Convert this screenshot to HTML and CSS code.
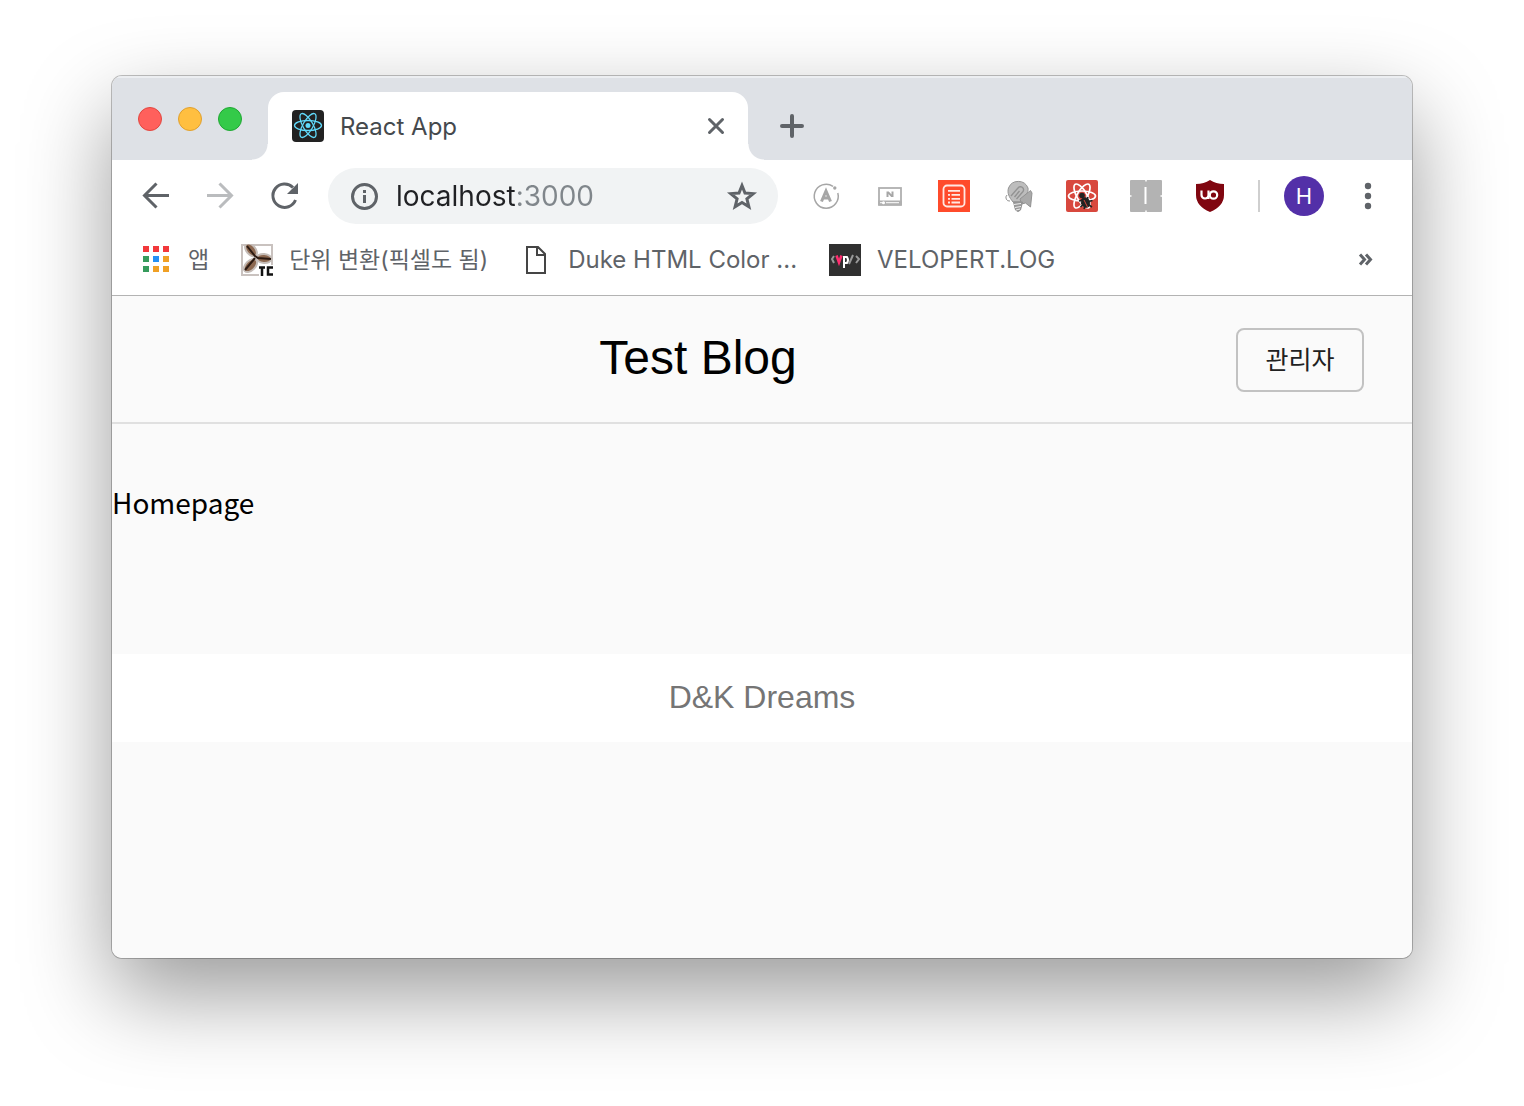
FILE: index.html
```html
<!DOCTYPE html>
<html lang="ko">
<head>
<meta charset="utf-8">
<meta name="viewport" content="width=device-width, initial-scale=1">
<title>React App</title>
<link rel="stylesheet" href="styles.css">
</head>
<body>
<div class="window">
  <div class="tab-strip">
    <div class="lights">
      <button class="light light-close" aria-label="Close window"></button>
      <button class="light light-minimize" aria-label="Minimize window"></button>
      <button class="light light-zoom" aria-label="Zoom window"></button>
    </div>
    <div class="tab">
      <svg class="icon" viewBox="0 0 32 32" aria-hidden="true">
        <rect width="32" height="32" rx="4" fill="#222"/>
        <g fill="none" stroke="#61dafb" stroke-width="1.3">
          <ellipse cx="16" cy="15.500" rx="13.500" ry="5"/>
          <ellipse cx="16" cy="15.500" rx="13.500" ry="5" transform="rotate(60 16 15.500)"/>
          <ellipse cx="16" cy="15.500" rx="13.500" ry="5" transform="rotate(120 16 15.500)"/>
        </g>
        <circle cx="16" cy="15.500" r="2.500" fill="#61dafb"/>
      </svg>
      <span class="tab-title">React App</span>
      <button class="plain" aria-label="Close tab">
        <svg class="icon" viewBox="0 0 32 32" stroke="#5f6368" stroke-width="3" stroke-linecap="round"><path d="M9.500 9.500l13 13M22.500 9.500l-13 13"/></svg>
      </button>
    </div>
    <button class="plain new-tab" aria-label="New tab">
      <svg class="icon" viewBox="0 0 32 32" stroke="#5f6368" stroke-width="4" stroke-linecap="round"><path d="M6 16h20M16 6v20"/></svg>
    </button>
  </div>

  <div class="toolbar">
    <div class="slots">
      <button class="slot" aria-label="Back">
        <svg class="icon" viewBox="0 0 32 32" fill="none" stroke="#5f6368" stroke-width="3"><path d="M29 15.500H5M16.500 3.500l-12 12 12 12"/></svg>
      </button>
      <button class="slot" aria-label="Forward" disabled>
        <svg class="icon" viewBox="0 0 32 32" fill="none" stroke="#babcbe" stroke-width="3"><path d="M3 15.500h24M15.500 3.500l12 12-12 12"/></svg>
      </button>
      <button class="slot" aria-label="Reload">
        <svg class="icon" viewBox="0 0 32 32" fill="none" stroke="#5f6368" stroke-width="3"><path d="M27.500 20a11.700 11.700 0 1 1-2.500-12.500"/><path d="M30 3v11H19z" fill="#5f6368" stroke="none"/></svg>
      </button>
    </div>
    <div class="omnibox">
      <button class="plain" aria-label="Site information">
        <svg class="icon" viewBox="0 0 32 32" fill="none" stroke="#5f6368" stroke-width="3"><circle cx="16.500" cy="16.500" r="12"/><path d="M16.500 15v8M16.500 10v3"/></svg>
      </button>
      <input class="address" type="text" value="localhost:3000" aria-label="Address" spellcheck="false">
      <button class="plain" aria-label="Bookmark this page">
        <svg class="icon" viewBox="0 0 32 32" fill="none" stroke="#5f6368" stroke-width="3"><path d="M16 5.500l3 7.500 8.200.6-6.300 5.200 2 8L16 22.500l-6.900 4.300 2-8-6.300-5.200L13 13z"/></svg>
      </button>
    </div>
    <div class="slots">
      <button class="slot" aria-label="Apollo Client Developer Tools">
        <svg class="icon" viewBox="0 0 32 32" fill="none" stroke="#a6a6a6"><path d="M27.800 13A12 12 0 1 1 23 6.300" stroke-width="1.500"/><circle cx="24.800" cy="8" r="1.700" fill="#a6a6a6" stroke="none"/><path d="M11.500 21.500L16 11l4.500 10.500M13 18h6" stroke-width="3"/></svg>
      </button>
      <button class="slot" aria-label="Video extension">
        <svg class="icon" viewBox="0 0 32 32" fill="none" stroke="#b0b0b0"><rect x="5" y="8" width="22" height="17" stroke-width="1.800"/><path d="M4 22.800h24" stroke-width="4.500"/><path d="M6 22.700h3M12 22.700h13" stroke="#fff" stroke-width="1"/><circle cx="9.500" cy="22.700" r="1.500" fill="#fff" stroke="none"/><path d="M12.500 17v-5.500h2.300l2.700 3v-3h2V17h-2.300l-2.700-3v3z" fill="#a6a6a6" stroke="none"/></svg>
      </button>
      <button class="slot" aria-label="List extension">
        <svg class="icon" viewBox="0 0 32 32" fill="none" stroke="#ffe8e3" stroke-width="1.800"><rect width="32" height="32" fill="#ff4b2b" stroke="none"/><rect x="5.500" y="5.500" width="21" height="21" rx="3.500"/><path d="M10 10.900h12M13.500 14.900H22M13.500 18.900H22M13.500 22.500H22M10 14.900h2M10 18.900h2M10 22.500h2"/></svg>
      </button>
      <button class="slot" aria-label="Lamp extension">
        <svg class="icon" viewBox="0 0 32 32" fill="#bdbdbd" stroke="#929292" stroke-width="1"><path d="M11 22C7 17 5 13 6.500 8A10.500 10.500 0 0 1 26 8c1 5-4 9-6 14z"/><path d="M18 19L28.500 10.500 30 13l-1.500 14-5-4-4 1z" fill="#aaa"/><path d="M5 15a3.500 3.500 0 0 0 3 6" fill="none"/><path d="M9 16l7-8a3 3 0 0 1 5 3.500L14.500 19M12.500 17l5-6" fill="none" stroke-width="1.400"/><path d="M11.500 22h9l-2 8q-2.500 3-5 0z" fill="#999"/><path d="M12 24.500l7-1M13 27.500l6-1M14 30l4-1" stroke="#eee"/></svg>
      </button>
      <button class="slot" aria-label="React Developer Tools">
        <svg class="icon" viewBox="0 0 32 32"><rect width="32" height="32" rx="2" fill="#d8483e"/><g fill="none" stroke="#fff" stroke-width="1.700"><ellipse cx="16" cy="16" rx="13.500" ry="5"/><ellipse cx="16" cy="16" rx="13.500" ry="5" transform="rotate(60 16 16)"/><ellipse cx="16" cy="16" rx="13.500" ry="5" transform="rotate(120 16 16)"/></g><g fill="#222" stroke="#222"><circle cx="16" cy="15.500" r="2.800" stroke="none"/><ellipse cx="19.500" cy="22.500" rx="4" ry="5" transform="rotate(-28 19.500 22.500)"/><path d="M13 21l4-1M14.500 27l3-3M22 17l-1 3M26.500 20.500l-4 1M26 27l-3-2M18 29l1-3" stroke-width="1.600"/></g><path d="M18 20l3.500 7" stroke="#d8483e" stroke-width="1"/></svg>
      </button>
      <button class="slot" aria-label="Grid extension">
        <svg class="icon" viewBox="0 0 32 32"><rect width="32" height="32" rx="1" fill="#b3b3b3"/><path d="M15.500 7v17" stroke="#fff" stroke-width="2"/><path d="M16 0v1.500M16 30.500V32M0 16h1.500M30.500 16H32" stroke="#fff" stroke-width="1.500"/></svg>
      </button>
      <button class="slot" aria-label="uBlock Origin">
        <svg class="icon" viewBox="0 0 32 32"><path d="M16 0q6 4 14 4v11q0 11-14 17Q2 26 2 15V4q8 0 14-4z" fill="#800610"/><path d="M7.500 10.500V15a3.500 3.500 0 0 0 7 0v-4.500M14.500 15.500V19" fill="none" stroke="#fff" stroke-width="2.200"/><circle cx="19.500" cy="15" r="3.700" fill="none" stroke="#fff" stroke-width="2.200"/></svg>
      </button>
    </div>
    <span class="divider"></span>
    <button class="avatar" aria-label="Profile">H</button>
    <button class="slot menu" aria-label="Menu">
      <svg class="icon" viewBox="0 0 32 32" fill="#5f6368"><circle cx="16" cy="6" r="3.200"/><circle cx="16" cy="16" r="3.200"/><circle cx="16" cy="26" r="3.200"/></svg>
    </button>
  </div>

  <nav class="bookmarks" aria-label="Bookmarks">
    <a class="bookmark korean" href="#">
      <svg class="icon" viewBox="0 0 32 32"><path d="M3 2h6v6H3zM13 2h6v6h-6zM23 2h6v6h-6z" fill="#f2383b"/><path d="M3 12h6v6H3zM3 22h6v6H3z" fill="#369b5c"/><path d="M13 12h6v6h-6z" fill="#2490f5"/><path d="M23 12h6v6h-6zM13 22h6v6h-6zM23 22h6v6h-6z" fill="#f0a025"/></svg>
      <span>앱</span>
    </a>
    <a class="bookmark korean" href="#">
      <svg class="icon" viewBox="0 0 32 32"><rect x="1" y="1" width="30" height="30" fill="#fff" stroke="#c9c2bf" stroke-width="2"/><g fill="#8c6850" stroke="#c5bdb8" stroke-width="2"><ellipse cx="10" cy="6" rx="7.500" ry="4.500" transform="rotate(50 10 6)"/><ellipse cx="23" cy="14.500" rx="7.500" ry="4.500" transform="rotate(5 23 14.500)"/><ellipse cx="9.500" cy="21.500" rx="8" ry="4.800" transform="rotate(-45 9.500 21.500)"/></g><path d="M6 2l8 10 3 2 13 1M14 14L4 26" fill="none" stroke="#2b1a12" stroke-width="2"/><path d="M18 21h14v11H18z" fill="#fff"/><path d="M18 23.500h6M21 23.500V32M32 23.500h-5v7h5" fill="none" stroke="#111" stroke-width="2.500"/></svg>
      <span>단위 변환(픽셀도 됨)</span>
    </a>
    <a class="bookmark" href="#">
      <svg class="icon" viewBox="0 0 32 32" fill="none" stroke="#454545" stroke-width="2"><path d="M7 3h11l7 7v19H7zM17 3v8h8"/></svg>
      <span>Duke HTML Color ...</span>
    </a>
    <a class="bookmark" href="#">
      <svg class="icon" viewBox="0 0 32 32" fill="none" stroke-width="2"><rect width="32" height="32" fill="#303030"/><path d="M5 12l-2 3 2 4M27 12l3 3-3 4M24 11l-4 9" stroke="#999"/><path d="M7.500 11.500l2.500 7 2.500-7" stroke="#ff2d6f" stroke-width="2.500"/><path d="M15 24V13h3q2 3 0 6h-3" stroke="#fff"/></svg>
      <span>VELOPERT.LOG</span>
    </a>
    <button class="plain more" aria-label="More bookmarks">
      <svg class="icon" viewBox="0 0 32 32" fill="none" stroke="#5f6368" stroke-width="3"><path d="M10 10.500l4.500 5-4.500 5M16 10.500l4.500 5-4.500 5"/></svg>
    </button>
  </nav>

  <div class="page">
    <header class="site-header">
      <h1 class="site-title">Test Blog</h1>
      <button class="admin">관리자</button>
    </header>
    <main class="content">Homepage</main>
    <footer class="site-footer">D&amp;K Dreams</footer>
  </div>
</div>
</body>
</html>
```
FILE: styles.css
```css
* {
  box-sizing: border-box;
}

body {
  display: flex;
  min-height: 100vh;
  margin: 0;
  padding: 76px 112px 148px;
  background: #fff;
  font-family: Inter, "Noto Sans CJK KR", sans-serif;
}

button,
input {
  margin: 0;
  padding: 0;
  border: 0;
  background: none;
  font: inherit;
}

.window {
  display: flex;
  flex: 1;
  flex-direction: column;
  min-width: 0;
  overflow: hidden;
  border-radius: 10px;
  background: #fff;
  box-shadow: 0 0 0 1px rgba(0, 0, 0, 0.24), 0 36px 88px rgba(0, 0, 0, 0.4);
}

.icon {
  display: block;
  flex: none;
  width: 32px;
  height: 32px;
}

.plain {
  flex: none;
}

/* Tab strip */
.tab-strip {
  display: flex;
  align-items: flex-end;
  height: 84px;
  background: #dee1e6;
  box-shadow: inset 0 2px 0 #eceef1;
}

.lights {
  display: flex;
  gap: 16px;
  align-self: center;
  padding: 2px 26px 0;
}

.light {
  width: 24px;
  height: 24px;
  border: 1px solid;
  border-radius: 50%;
}

.light-close {
  border-color: #e2463f;
  background: #ff605c;
}

.light-minimize {
  border-color: #e0a02e;
  background: #ffbf40;
}

.light-zoom {
  border-color: #1fa833;
  background: #34ca49;
}

.tab {
  position: relative;
  display: flex;
  flex: 0 1 480px;
  gap: 16px;
  align-items: center;
  height: 68px;
  padding: 0 16px 0 24px;
  border-radius: 16px 16px 0 0;
  background: #fff;
}

.tab::before,
.tab::after {
  position: absolute;
  bottom: 0;
  width: 16px;
  height: 16px;
  content: "";
}

.tab::before {
  right: 100%;
  background: radial-gradient(circle at 0 0, transparent 15px, #fff 16px);
}

.tab::after {
  left: 100%;
  background: radial-gradient(circle at 100% 0, transparent 15px, #fff 16px);
}

.tab-title {
  flex: 1;
  color: #45494d;
  font-size: 24px;
}

.new-tab {
  margin: 0 28px 18px;
}

/* Toolbar */
.toolbar {
  display: flex;
  align-items: center;
  height: 72px;
  padding: 0 20px;
}

.slots {
  display: flex;
  gap: 16px;
}

.slot {
  display: flex;
  flex: none;
  align-items: center;
  justify-content: center;
  width: 48px;
  height: 48px;
}

.omnibox {
  display: flex;
  flex: 1;
  gap: 16px;
  align-items: center;
  min-width: 0;
  height: 56px;
  margin: 0 24px 0 20px;
  padding: 0 20px;
  border-radius: 28px;
  background: #f1f3f4;
}

/* Host in dark text, port in grey */
.address {
  flex: 1;
  min-width: 0;
  background: linear-gradient(90deg, #202124 119px, #80868b 119px);
  background-clip: text;
  color: transparent;
  font-size: 28px;
  line-height: 40px;
}

.divider {
  flex: none;
  width: 2px;
  height: 32px;
  margin: 0 24px;
  background: #cfcfcf;
}

.avatar {
  flex: none;
  width: 40px;
  height: 40px;
  border-radius: 50%;
  background: #5330a8;
  color: #fff;
  font-size: 22px;
}

.menu {
  margin-left: 20px;
}

/* Bookmarks bar */
.bookmarks {
  display: flex;
  gap: 32px;
  align-items: center;
  height: 64px;
  padding: 0 30px 8px 28px;
  border-bottom: 1px solid #b3b3b3;
}

.bookmark {
  display: flex;
  gap: 16px;
  align-items: center;
  color: #5f6368;
  font-size: 24px;
  line-height: 32px;
  text-decoration: none;
  white-space: nowrap;
}

.korean {
  font-size: 23px;
}

.more {
  margin-left: auto;
}

/* Page */
.page {
  flex: 1;
  background: #fafafa;
}

.site-header {
  display: flex;
  align-items: flex-start;
  padding: 32px 48px 30px;
  border-bottom: 2px solid #e0e0e0;
}

.site-title {
  flex: 1;
  margin: 0;
  color: #000;
  font: 400 48px/60px "Liberation Sans", sans-serif;
  text-align: center;
}

.admin {
  width: 128px;
  height: 64px;
  padding-bottom: 4px;
  border: 2px solid #c2c2c2;
  border-radius: 8px;
  color: #212121;
  font: 400 25px/40px "Noto Sans CJK KR", sans-serif;
}

.content {
  padding: 54px 0 128px;
  color: #000;
  font: 400 28px/48px "Noto Sans CJK KR", sans-serif;
}

.site-footer {
  padding: 19px 24px 21px;
  background: #fff;
  color: #757575;
  font: 400 32px/48px "Liberation Sans", sans-serif;
  text-align: center;
}
```
